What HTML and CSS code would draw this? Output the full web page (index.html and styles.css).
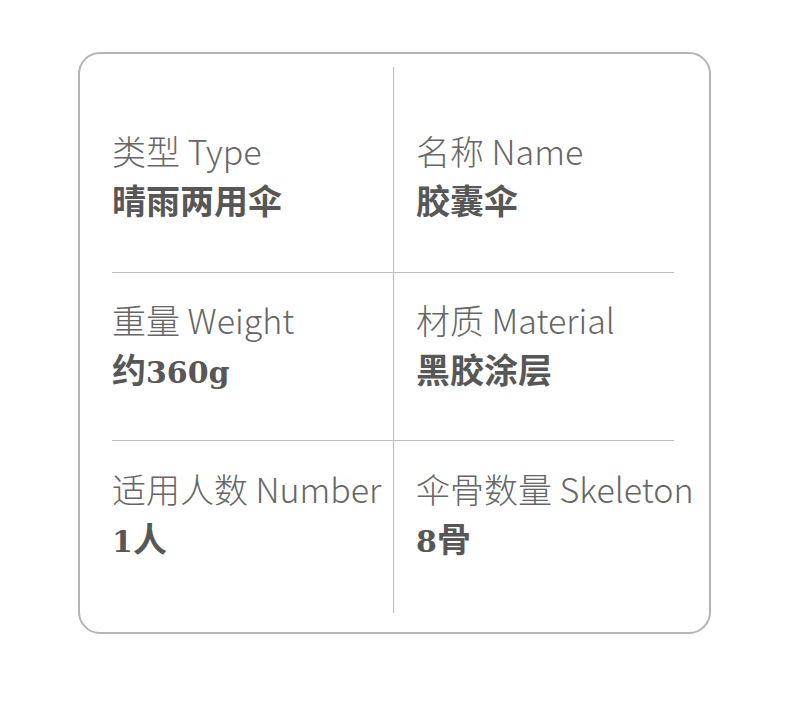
FILE: index.html
```html
<!DOCTYPE html>
<html lang="zh-CN">
<head>
<meta charset="utf-8">
<title>伞参数</title>
<link rel="stylesheet" href="styles.css">
</head>
<body>
<div class="card">
  <div class="grid">
    <div class="cell left first"><div class="label">类型 Type</div><div class="value">晴雨两用伞</div></div>
    <div class="cell right first"><div class="label">名称 Name</div><div class="value">胶囊伞</div></div>
    <div class="cell left"><div class="label">重量 Weight</div><div class="value">约<span class="num">360g</span></div></div>
    <div class="cell right"><div class="label">材质 Material</div><div class="value">黑胶涂层</div></div>
    <div class="cell left last"><div class="label">适用人数 Number</div><div class="value"><span class="num">1</span>人</div></div>
    <div class="cell right last"><div class="label">伞骨数量 Skeleton</div><div class="value"><span class="num">8</span>骨</div></div>
  </div>
</div>
</body>
</html>
```

FILE: styles.css
```css
* { box-sizing: border-box; }
html, body { margin: 0; padding: 0; background: #fff; }
body { padding: 52px 0 0 78px; }
.card {
  width: 633px;
  height: 582px;
  border: 2px solid #b4b4b4;
  border-radius: 22px;
  padding: 13px 35px 19px 32px;
}
.grid {
  display: grid;
  grid-template-columns: 282px 280px;
  grid-template-rows: 206px 168px 172px;
}
.cell { padding-top: 22px; white-space: nowrap; }
.cell.first { padding-top: 59px; border-bottom: 1px solid #bdbdbd; }
.cell.last { padding-top: 23px; }
.cell:not(.first):not(.last) { border-bottom: 1px solid #bdbdbd; }
.cell.left { border-right: 1px solid #bdbdbd; }
.cell.right { padding-left: 22px; }
.label {
  font-family: "Noto Sans CJK SC", "Noto Sans", sans-serif;
  font-weight: 300;
  font-size: 34px;
  line-height: 49px;
  color: #666;
}
.value {
  font-family: "Noto Sans CJK SC", serif;
  font-weight: 700;
  font-size: 34px;
  line-height: 49px;
  color: #575757;
}
.num {
  font-family: "DejaVu Serif", "Liberation Serif", serif;
  font-weight: 700;
  font-size: 30px;
}
```
